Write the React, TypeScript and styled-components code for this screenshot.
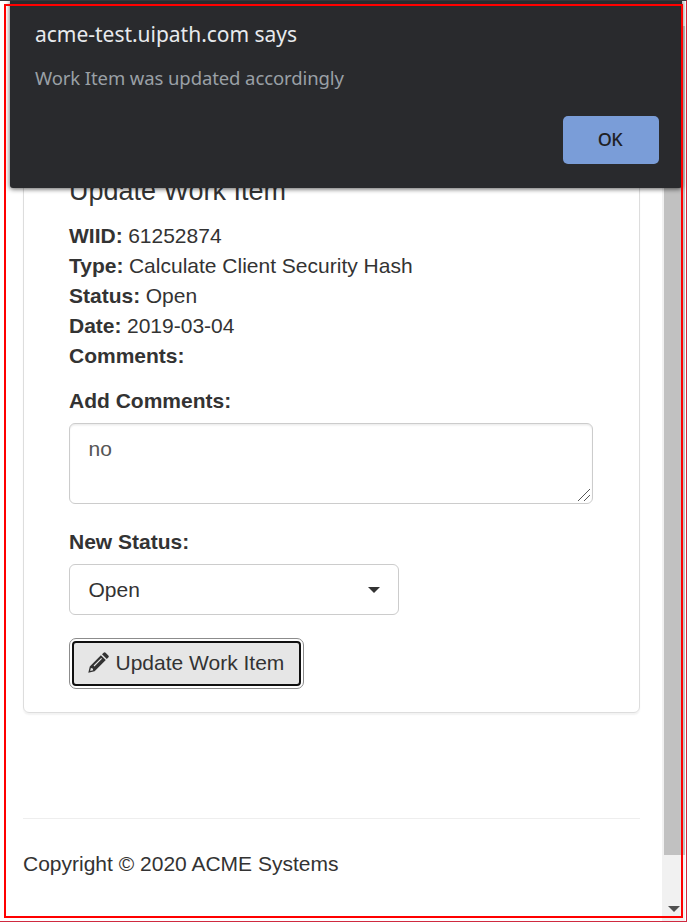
import React from "react";
import styled, { createGlobalStyle } from "styled-components";

const GlobalStyle = createGlobalStyle`
  * { box-sizing: border-box; }
  body { margin: 0; background: #fff; overflow: hidden; }
`;

const Window = styled.div`
  position: relative;
  display: flex;
  width: 687px;
  height: 922px;
  overflow: hidden;
  border: 1px solid #d02a40;
  border-top-color: #35363a;
  border-left: 0;
  background: #fff;
  color: #333;
  font: 21px/30px "Liberation Sans", Arial, sans-serif;
`;

const Page = styled.main`
  flex: 1;
  padding: 109px 22px 0 23px;
`;

const Panel = styled.section`
  height: 603px;
  padding: 64px 46px 0 45px;
  border: 1px solid #ddd;
  border-radius: 6px;
  box-shadow: 0 1.5px 1.5px rgba(0, 0, 0, 0.05);
`;

const Heading = styled.h1`
  margin: 0 0 13px;
  font-size: 27px;
  font-weight: 400;
  line-height: 33px;
`;

const Details = styled.dl`
  margin: 0;
`;

const Detail = styled.div`
  display: flex;
  gap: 5.5px;
  dt { font-weight: 700; }
  dd { margin: 0; }
`;

const Label = styled.label<{ $top: number }>`
  display: block;
  margin: ${({ $top }) => $top}px 0 7px;
  font-weight: 700;
`;

const Comments = styled.div`
  display: flex;
  justify-content: space-between;
  width: 524px;
  height: 81px;
  padding: 10px 1px 1px 18.5px;
  border: 1px solid #ccc;
  border-radius: 6px;
  box-shadow: inset 0 1.5px 1.5px rgba(0, 0, 0, 0.075);
  color: #555;
  svg { align-self: flex-end; }
`;

const Select = styled.div`
  display: flex;
  align-items: center;
  justify-content: space-between;
  width: 330px;
  height: 51px;
  padding: 0 18px 0 18.5px;
  border: 1px solid #ccc;
  border-radius: 6px;
`;

const Submit = styled.button`
  display: flex;
  align-items: center;
  gap: 6.5px;
  width: 229px;
  height: 45px;
  margin: 26px 0 0 3px;
  padding: 0 0 2px 14px;
  border: 2px solid #101010;
  border-radius: 4px;
  outline: 1px solid #8c8c8c;
  outline-offset: 2px;
  background: #e6e6e6;
  color: #333;
  font: inherit;
  white-space: nowrap;
`;

const Footer = styled.footer`
  margin-top: 105px;
  padding-top: 30px;
  border-top: 1px solid #eee;
`;

const Scrollbar = styled.div`
  display: flex;
  flex-direction: column;
  align-items: center;
  justify-content: space-between;
  width: 24px;
  padding: 25px 1px 9px 2px;
  border-right: 1px solid #fff;
  background: #f1f1f1;
`;

const Thumb = styled.div`
  width: 21px;
  height: 829px;
  background: #c1c1c1;
`;

const Dialog = styled.div`
  position: absolute;
  top: -1px;
  left: 10px;
  display: flex;
  flex-direction: column;
  width: 672px;
  height: 188px;
  padding: 20px 23px 24px 25px;
  border-radius: 0 0 3px 3px;
  background: #292a2d;
  box-shadow: 0 1px 5px rgba(0, 0, 0, 0.65);
  font-family: "Noto Sans", sans-serif;
`;

const DialogTitle = styled.div`
  color: #e8eaed;
  font-size: 21px;
  letter-spacing: -0.02px;
  line-height: 29px;
`;

const DialogText = styled.div`
  margin-top: 14px;
  color: #9aa0a6;
  font-size: 18.5px;
  letter-spacing: -0.1px;
`;

const OkButton = styled.button`
  align-self: flex-end;
  width: 96px;
  height: 48px;
  margin-top: auto;
  padding: 0 2px 2px 0;
  border: 0;
  border-radius: 5px;
  background: #7a9dd8;
  color: #202124;
  font: 500 18px "Noto Sans", sans-serif;
  letter-spacing: -0.5px;
`;

const Highlight = styled.div`
  position: absolute;
  top: 3px;
  left: 4px;
  width: 679px;
  height: 914px;
  border: 2px solid #f00;
  pointer-events: none;
`;

const details = [
  ["WIID:", "61252874"],
  ["Type:", "Calculate Client Security Hash"],
  ["Status:", "Open"],
  ["Date:", "2019-03-04"],
  ["Comments:", ""],
];

const Pencil = () => (
  <svg width="21" height="21" viewBox="0 0 21 21" fill="#333">
    <path d="M14 2.2 15.6.7q1-1 2 0l2.7 2.7q1 1 0 2L18.8 6.9z" />
    <path
      fillRule="evenodd"
      d="M12.9 3.2 17.8 8.1 6.6 19.3.3 20.8 1.8 14.4zM13.2 6 5.6 13.6l.8.8L14 6.8zM2.9 16 2.2 18.9 5.1 18.2 4.8 16.5z"
    />
  </svg>
);

export default function App() {
  return (
    <>
      <GlobalStyle />
      <Window>
        <Page>
          <Panel>
            <Heading>Update Work Item</Heading>
            <Details>
              {details.map(([name, value]) => (
                <Detail key={name}>
                  <dt>{name}</dt>
                  <dd>{value}</dd>
                </Detail>
              ))}
            </Details>
            <Label $top={15}>Add Comments:</Label>
            <Comments>
              no
              <svg width="14" height="14" stroke="#555" strokeWidth="1">
                <path d="M1 13 13 1M7 13l6-6" />
              </svg>
            </Comments>
            <Label $top={23}>New Status:</Label>
            <Select>
              Open
              <svg width="12" height="6" fill="#333"><path d="M0 0h12L6 6z" /></svg>
            </Select>
            <Submit>
              <Pencil />
              Update Work Item
            </Submit>
          </Panel>
          <Footer>Copyright © 2020 ACME Systems</Footer>
        </Page>
        <Scrollbar>
          <Thumb />
          <svg width="12" height="6" fill="#505050"><path d="M0 0h12L6 6z" /></svg>
        </Scrollbar>
        <Dialog role="alertdialog">
          <DialogTitle>acme-test.uipath.com says</DialogTitle>
          <DialogText>Work Item was updated accordingly</DialogText>
          <OkButton>OK</OkButton>
        </Dialog>
        <Highlight />
      </Window>
    </>
  );
}
